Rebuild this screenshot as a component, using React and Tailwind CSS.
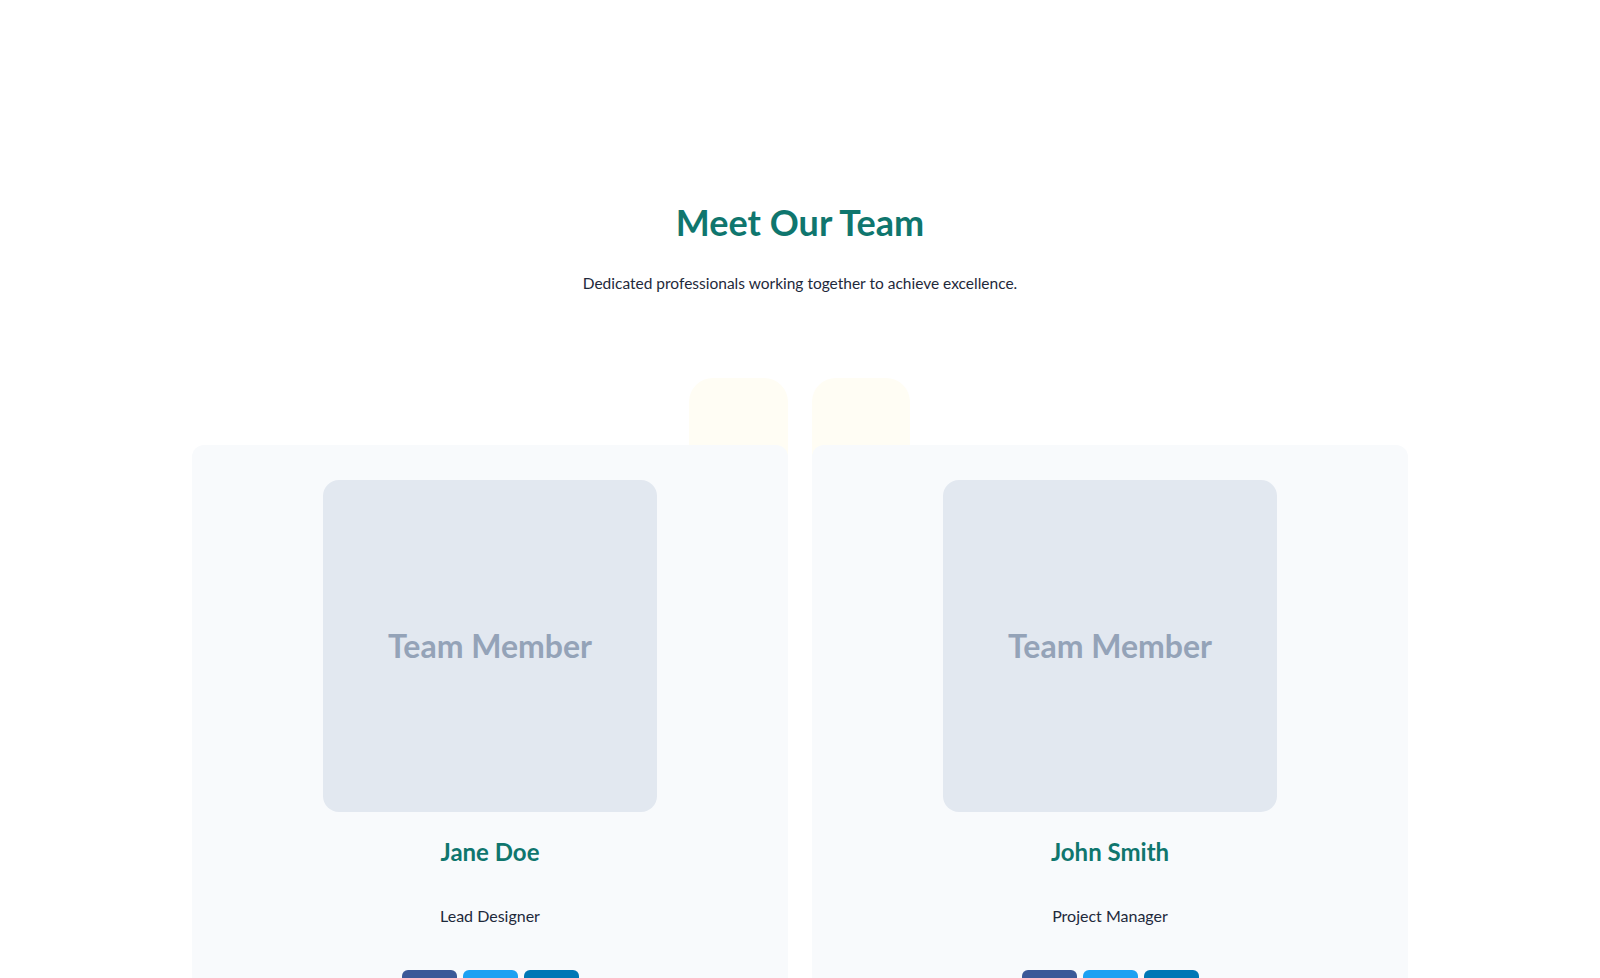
import { FaFacebookF, FaTwitter, FaLinkedinIn } from 'react-icons/fa';

// Seção "Meet Our Team": título centralizado e uma grade de dois cartões,
// cada um com foto (placeholder), nome, cargo e botões de redes sociais.
const equipe = [
  { nome: 'Jane Doe', cargo: 'Lead Designer', lado: 'direita' },
  { nome: 'John Smith', cargo: 'Project Manager', lado: 'esquerda' },
];

const redes = [
  { nome: 'Facebook', cor: 'bg-[#3b5998]', Icone: FaFacebookF },
  { nome: 'Twitter', cor: 'bg-[#1da1f2]', Icone: FaTwitter },
  { nome: 'LinkedIn', cor: 'bg-[#0077b5]', Icone: FaLinkedinIn },
];

function CartaoMembro({ membro }) {
  return (
    <div className="relative">
      {/* bloco decorativo atrás do cartão */}
      <div
        className={
          membro.lado === 'direita'
            ? 'absolute right-0 -top-[67px] w-[99px] h-[160px] rounded-3xl bg-[#fffdf4]'
            : 'absolute left-0 -top-[67px] w-[98px] h-[160px] rounded-3xl bg-[#fffdf4]'
        }
      />
      <div className="relative bg-[#f8fafc] rounded-xl pt-[35px] px-8 pb-10 flex flex-col items-center">
        <div className="w-[334px] h-[332px] rounded-2xl bg-[#e2e8f0] flex items-center justify-center">
          <span className="font-['Lato',sans-serif] font-bold text-[32px] text-[#94a3b8]">Team Member</span>
        </div>
        <h3 className="mt-6 text-2xl leading-8 font-bold text-[#0f766e]">{membro.nome}</h3>
        <p className="mt-9 text-base leading-6 text-[#1e293b]">{membro.cargo}</p>
        <div className="mt-[42px] flex gap-1.5">
          {redes.map(({ nome, cor, Icone }) => (
            <a
              key={nome}
              href="#"
              aria-label={nome}
              className={`${cor} w-[55px] h-10 rounded-md flex items-center justify-center text-white`}
            >
              <Icone className="w-4 h-4" />
            </a>
          ))}
        </div>
      </div>
    </div>
  );
}

export default function App() {
  return (
    <section className="min-h-screen bg-white font-['Lato',sans-serif] pt-[202px] pb-24">
      <div className="max-w-7xl mx-auto px-8">
        <div className="text-center">
          <h2 className="text-4xl leading-10 font-bold text-[#0f766e]">Meet Our Team</h2>
          <p className="mt-[29px] text-[15.5px] leading-6 text-[#1e293b]">
            Dedicated professionals working together to achieve excellence.
          </p>
        </div>
        <div className="mt-[150px] grid grid-cols-2 gap-6">
          {equipe.map((membro) => (
            <CartaoMembro key={membro.nome} membro={membro} />
          ))}
        </div>
      </div>
    </section>
  );
}
